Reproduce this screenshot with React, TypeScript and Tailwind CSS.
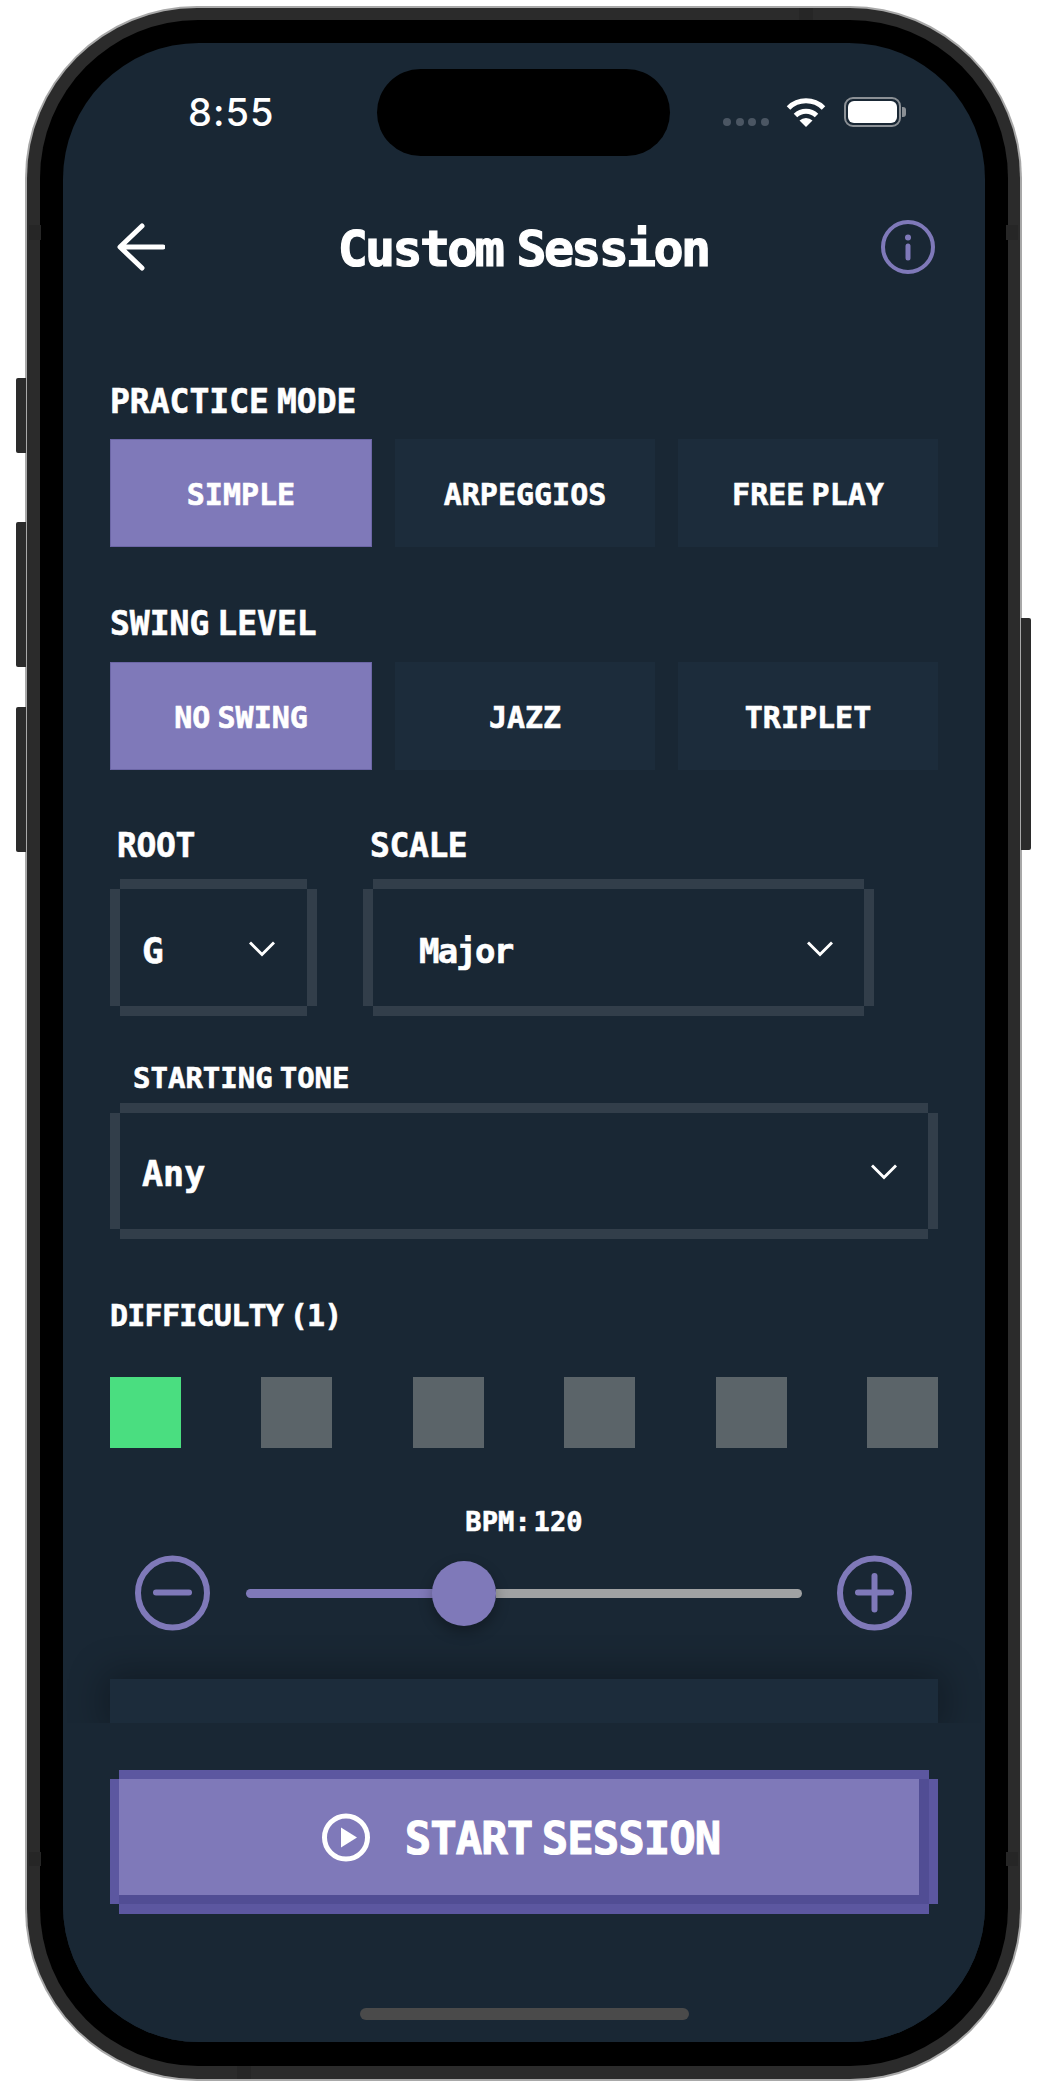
import React from "react";

const pixel = "font-['DejaVu_Sans_Mono',monospace] font-bold text-white whitespace-nowrap [-webkit-text-stroke:0.6px_white] [word-spacing:-0.36em]";

function Label({ children, className = "" }: { children: React.ReactNode; className?: string }) {
  return <div className={`${pixel} leading-[24px] h-[24px] ${className}`}>{children}</div>;
}

function Option({ label, active }: { label: string; active?: boolean }) {
  return (
    <div
      className={`flex-1 h-[108px] flex items-center justify-center pt-[3px] ${pixel} text-[30px] ${
        active ? "bg-[#7f79b9] border border-[#6c66a6]" : "bg-[#1c2c3b]"
      }`}
    >
      {label}
    </div>
  );
}

function Chevron() {
  return (
    <svg width="26" height="16" viewBox="0 0 26 16" fill="none" className="shrink-0 mt-[2px]">
      <path d="M2 2.5L13 13.5L24 2.5" stroke="white" strokeWidth="3" strokeLinecap="square" />
    </svg>
  );
}

function Select({ value, className, textClass }: { value: string; className: string; textClass: string }) {
  return (
    <div
      className={`m-[10px] flex items-center justify-between shadow-[0_-10px_0_0_#323e4a,0_10px_0_0_#323e4a,-10px_0_0_0_#323e4a,10px_0_0_0_#323e4a] ${className}`}
    >
      <span className={`${pixel} leading-[40px] pt-[6px] ${textClass}`}>{value}</span>
      <Chevron />
    </div>
  );
}

function RoundIcon({ plus }: { plus?: boolean }) {
  return (
    <svg width="75" height="76" viewBox="0 0 75 76" fill="none" className="shrink-0">
      <circle cx="37.5" cy="38" r="34.5" stroke="#7f79b9" strokeWidth="6" />
      <path d="M21 37.5H54" stroke="#7f79b9" strokeWidth="6" strokeLinecap="round" />
      {plus && <path d="M37.5 21V54.5" stroke="#7f79b9" strokeWidth="6" strokeLinecap="round" />}
    </svg>
  );
}

export default function App() {
  return (
    <div className="w-[1048px] h-[2083px] bg-white pl-[25px] pt-[6px] overflow-hidden relative">
      {/* side buttons */}
      <div className="absolute left-[16px] top-[378px] w-[10px] h-[75px] bg-[#2b2b2b] rounded-l-[2px]" />
      <div className="absolute left-[16px] top-[522px] w-[10px] h-[145px] bg-[#2b2b2b] rounded-l-[2px]" />
      <div className="absolute left-[16px] top-[707px] w-[10px] h-[145px] bg-[#2b2b2b] rounded-l-[2px]" />
      <div className="absolute left-[1021px] top-[618px] w-[10px] h-[232px] bg-[#2b2b2b] rounded-r-[2px]" />

      {/* device */}
      <div className="w-[997px] h-[2075px] rounded-[172px] bg-[#a8a8a8] p-[2px]">
        <div className="relative w-full h-full rounded-[170px] bg-[#2b2b2b] pl-[13px] pr-[12px] pt-[12px] pb-[13px]">
          {/* antenna bands */}
          <div className="absolute left-[2px] top-[217px] w-[12px] h-[15px] bg-[#262626]" />
          <div className="absolute right-[2px] top-[217px] w-[12px] h-[15px] bg-[#262626]" />
          <div className="absolute left-[2px] top-[1844px] w-[12px] h-[14px] bg-[#262626]" />
          <div className="absolute right-[2px] top-[1844px] w-[12px] h-[14px] bg-[#262626]" />
          <div className="absolute left-[772px] top-0 w-[14px] h-[12px] bg-[#262626]" />
          <div className="absolute left-[210px] bottom-0 w-[14px] h-[13px] bg-[#262626]" />
          <div className="w-full h-full rounded-[158px] bg-black pl-[23px] pr-[23px] pt-[23px] pb-[24px]">
            {/* screen */}
            <div className="w-[922px] h-[1999px] rounded-[136px] bg-[#192734] overflow-hidden flex flex-col">
              {/* status bar */}
              <div className="mt-[26px] h-[87px] flex shrink-0">
                <div className="ml-[125px] w-[85px] mt-[25px] font-['Inter',sans-serif] font-medium text-[38px] leading-[36px] tracking-[1px] text-white">
                  8:55
                </div>
                <div className="ml-[104px] w-[293px] h-[87px] rounded-[44px] bg-black" />
                <div className="ml-[53px] mt-[49px] flex gap-[4.5px] h-[8px]">
                  <div className="w-[8px] h-[8px] rounded-full bg-[#4b5663]" />
                  <div className="w-[8px] h-[8px] rounded-full bg-[#4b5663]" />
                  <div className="w-[8px] h-[8px] rounded-full bg-[#4b5663]" />
                  <div className="w-[8px] h-[8px] rounded-full bg-[#4b5663]" />
                </div>
                <svg width="40" height="30" viewBox="0 0 40 30" fill="none" className="ml-[17px] mt-[28px]">
                  <path d="M2.5 11A25 25 0 0 1 37.5 11" stroke="white" strokeWidth="5" />
                  <path d="M9.5 18.5A15 15 0 0 1 30.5 18.5" stroke="white" strokeWidth="5" />
                  <path d="M13.5 23.5L20 30L26.5 23.5A9.5 9.5 0 0 0 13.5 23.5Z" fill="white" />
                </svg>
                <div className="ml-[18px] mt-[28px] flex items-center h-[30px]">
                  <div className="w-[57px] h-[30px] rounded-[9px] border-2 border-[#8b9095] p-[2px]">
                    <div className="w-full h-full rounded-[6px] bg-white" />
                  </div>
                  <div className="ml-[1px] w-[4px] h-[10px] rounded-r-[3px] bg-[#8b9095]" />
                </div>
              </div>

              {/* header */}
              <div className="mt-[64px] h-[54px] pl-[54px] pr-[50px] flex items-center justify-between shrink-0">
                <svg width="48" height="48" viewBox="0 0 48 48" fill="none">
                  <path d="M46 24H4M25 3L3 24L25 45" stroke="white" strokeWidth="5" strokeLinecap="round" strokeLinejoin="round" />
                </svg>
                <div className={`${pixel} text-[50px] leading-[54px] pt-[3px] tracking-[-2.7px] w-[372px] text-center [-webkit-text-stroke:1.2px_white]! [word-spacing:-0.26em]!`}>Custom Session</div>
                <svg width="54" height="54" viewBox="0 0 54 54" fill="none">
                  <circle cx="27" cy="27" r="25" stroke="#7f79b9" strokeWidth="4" />
                  <circle cx="27" cy="17.5" r="3" fill="#7f79b9" />
                  <path d="M27 26V38" stroke="#7f79b9" strokeWidth="5" strokeLinecap="round" />
                </svg>
              </div>

              {/* form */}
              <div className="pl-[47px] pr-[47px] shrink-0 flex flex-col">
                <Label className="mt-[116px] text-[33px]">PRACTICE MODE</Label>
                <div className="mt-[25px] flex gap-[23px]">
                  <Option label="SIMPLE" active />
                  <Option label="ARPEGGIOS" />
                  <Option label="FREE PLAY" />
                </div>

                <Label className="mt-[65px] text-[33px]">SWING LEVEL</Label>
                <div className="mt-[26px] flex gap-[23px]">
                  <Option label="NO SWING" active />
                  <Option label="JAZZ" />
                  <Option label="TRIPLET" />
                </div>

                <div className="mt-[64px] flex">
                  <div className="w-[207px]">
                    <Label className="ml-[7px] text-[33px] tracking-[-0.4px]">ROOT</Label>
                    <Select value="G" className="mt-[31px] h-[117px] pl-[22px] pr-[32px]" textClass="text-[36px]" />
                  </div>
                  <div className="ml-[46px] w-[511px]">
                    <Label className="ml-[7px] text-[33px] tracking-[-0.4px]">SCALE</Label>
                    <Select value="Major" className="mt-[31px] h-[117px] pl-[46px] pr-[31px]" textClass="text-[34px] tracking-[-1.8px]" />
                  </div>
                </div>

                <div className={`${pixel} mt-[52px] ml-[23px] text-[29px] leading-[21px] h-[21px]`}>STARTING TONE</div>
                <Select value="Any" className="mt-[24px] mb-[10px] h-[116px] pl-[22px] pr-[31px]" textClass="text-[35px]" />

                <Label className="mt-[65px] text-[30px] tracking-[-0.75px]">DIFFICULTY (1)</Label>
                <div className="mt-[49px] flex justify-between">
                  <div className="w-[71px] h-[71px] bg-[#4ade80]" />
                  <div className="w-[71px] h-[71px] bg-[#5b6469]" />
                  <div className="w-[71px] h-[71px] bg-[#5b6469]" />
                  <div className="w-[71px] h-[71px] bg-[#5b6469]" />
                  <div className="w-[71px] h-[71px] bg-[#5b6469]" />
                  <div className="w-[71px] h-[71px] bg-[#5b6469]" />
                </div>

                <div className={`${pixel} mt-[64px] text-center text-[27px] leading-[20px] h-[20px] tracking-[0.2px] [word-spacing:-0.52em]!`}>BPM: 120</div>

                <div className="mt-[23px] ml-[25px] mr-[26px] flex items-center">
                  <RoundIcon />
                  <div className="ml-[36px] mr-[35px] flex-1 flex items-center">
                    <div className="w-[190px] -mr-[4px] h-[9px] rounded-l-full bg-[#7f79b9]" />
                    <div className="w-[64px] h-[65px] rounded-full bg-[#7f79b9] shadow-[0_6px_14px_rgba(0,0,0,0.3)] relative" />
                    <div className="flex-1 h-[9px] rounded-r-full bg-[#a0a2a3]" />
                  </div>
                  <RoundIcon plus />
                </div>

                <div className="mt-[48px] h-[44px] bg-[#1c2c3b] shadow-[0_0_36px_6px_rgba(0,0,0,0.3)]" />
              </div>

              {/* footer */}
              <div className="relative flex-1 bg-[#192734] pl-[47px] pr-[47px] pt-[47px] flex flex-col">
                <div className="mx-[9px] mt-[9px] mb-[10px] h-[125px] flex items-center justify-center gap-[35px] pl-[4px] pr-[10px] pb-[9px] bg-[#7f79b9] shadow-[inset_-10px_-9px_0_0_#514d94,0_-9px_0_0_#5c57a0,0_10px_0_0_#5c57a0,-9px_0_0_0_#5c57a0,9px_0_0_0_#5c57a0]">
                  <svg width="48" height="49" viewBox="0 0 48 49" fill="none" className="shrink-0">
                    <circle cx="24" cy="24.5" r="21.5" stroke="white" strokeWidth="5" />
                    <path d="M19 14.5L35 24.5L19 34.5Z" fill="white" />
                  </svg>
                  <span className={`${pixel} text-[44px] leading-[40px] pt-[4px] tracking-[-1px] [-webkit-text-stroke:1px_white]!`}>START SESSION</span>
                </div>
                <div className="mt-[94px] mx-auto w-[329px] h-[12px] rounded-full bg-[#4a4a4a]" />
              </div>
            </div>
          </div>
        </div>
      </div>
    </div>
  );
}
